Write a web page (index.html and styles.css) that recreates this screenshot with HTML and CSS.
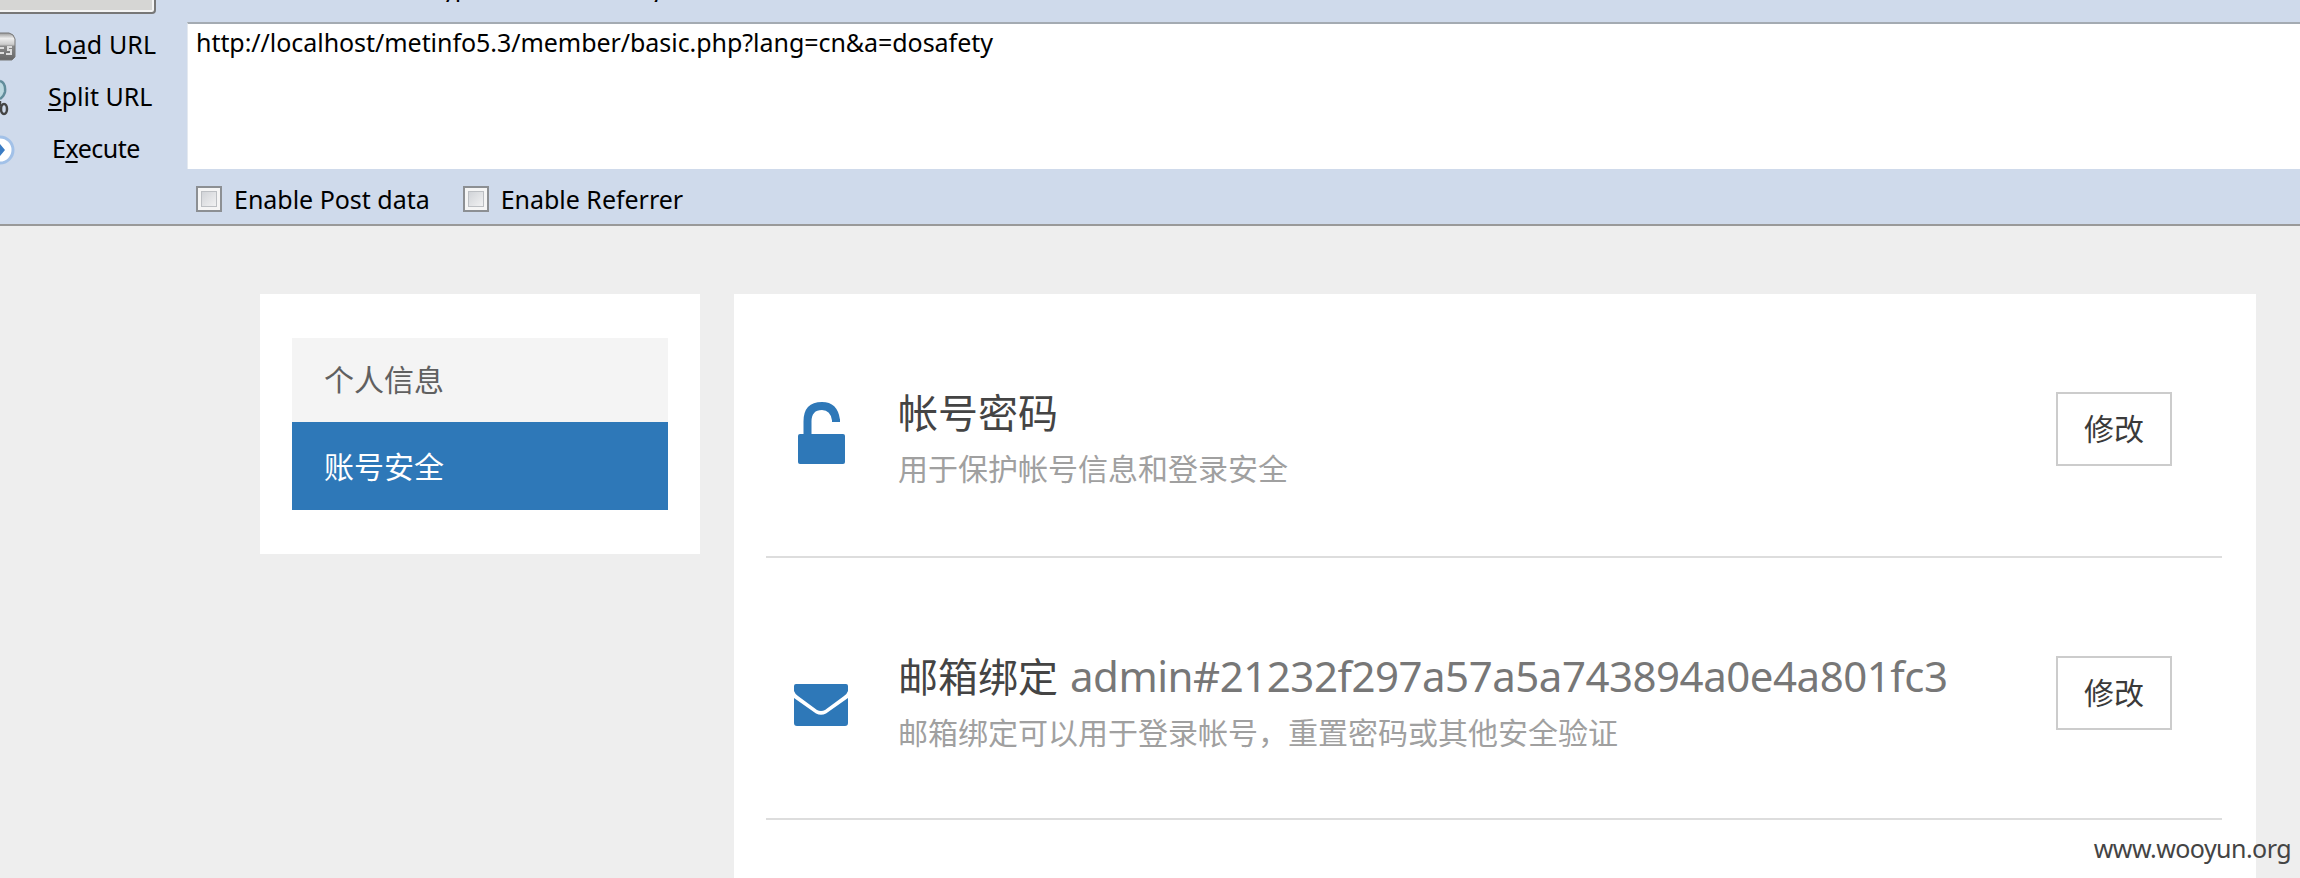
FILE: index.html
```html
<!DOCTYPE html>
<html lang="zh-CN">
<head>
<meta charset="utf-8">
<title>账号安全</title>
<link rel="stylesheet" href="styles.css">
</head>
<body>
<header class="hackbar">
  <div class="tool-select"></div>
  <div class="clipped-menu"><span class="yp">yp</span><span class="g">g</span></div>
  <nav class="actions">
    <div class="action"><svg class="action-icon" width="18" height="36" viewBox="0 0 18 36"><defs><linearGradient id="m" x1="0" y1="0" x2="0" y2="1"><stop offset="0" stop-color="#999"/><stop offset=".2" stop-color="#eee"/><stop offset=".42" stop-color="#ccc"/><stop offset=".5" stop-color="#888"/><stop offset="1" stop-color="#666"/></linearGradient></defs><path d="M-4 5H9Q14 6 15 11V29L12 32H-4Z" fill="url(#m)" stroke="#777"/><path d="M-2 20H4M0 25H4M12 19H8V22H11V26H6" stroke="#ddd" stroke-width="2" fill="none"/></svg><span class="action-label load">Lo<u>a</u>d URL</span></div>
    <div class="action"><svg class="action-icon" width="18" height="40" viewBox="0 0 18 40"><path d="M0 3Q6 5 5 14Q4 18 0 21" fill="#bcd8e0" stroke="#628d9b" stroke-width="2.500"/><path d="M0 23V28" stroke="#444" stroke-width="2.500"/><ellipse cx="4" cy="31" rx="3" ry="5" fill="none" stroke="#444" stroke-width="2.500"/></svg><span class="action-label split"><u>S</u>plit URL</span></div>
    <div class="action"><svg class="action-icon" width="18" height="36" viewBox="0 0 18 36"><circle cx="0" cy="18" r="13" fill="#fff" stroke="#a2c1e8" stroke-width="3"/><path d="M-4 15H0V12L5 18L0 24V21H-4Z" fill="#3b7cc4"/></svg><span class="action-label exec">E<u>x</u>ecute</span></div>
  </nav>
  <div class="request">
    <div class="url-field"><span class="url">http://localhost/metinfo5.3/member/basic.php?lang=cn&amp;a=dosafety</span></div>
    <div class="options">
      <label class="option"><i class="check"></i><span class="post">Enable Post data</span></label>
      <label class="option"><i class="check"></i><span class="referrer">Enable Referrer</span></label>
    </div>
  </div>
</header>
<main class="member">
  <aside class="sidebar">
    <a class="side-link">个人信息</a>
    <a class="side-link active">账号安全</a>
  </aside>
  <section class="panel">
    <article class="row">
      <div class="row-icon"><svg width="48" height="62" viewBox="0 0 48 62"><path d="M9.500 34V19.500Q9.500 4 24 4Q36 4 38 18" fill="none" stroke="#2e78b8" stroke-width="8"/><path d="M34 17H42V20H34Z" fill="#2e78b8"/><rect y="32" width="47" height="30" rx="2" fill="#2e78b8"/></svg></div>
      <div class="row-text"><h2>帐号密码</h2><p>用于保护帐号信息和登录安全</p></div>
      <button class="edit">修改</button>
    </article>
    <article class="row second">
      <div class="row-icon mail"><svg width="54" height="42" viewBox="0 0 54 42"><path d="M2 0H52Q54 0 54 2V7Q53 10 50 12L31 26Q27 28 23 26L4 12Q1 10 0 7V2Q0 0 2 0Z" fill="#2e78b8"/><path d="M0 14L22 29.500Q27 32 32 29.500L54 14V39Q54 42 51 42H3Q0 42 0 39Z" fill="#2e78b8"/></svg></div>
      <div class="row-text"><h2>邮箱绑定<span class="email">admin#21232f297a57a5a743894a0e4a801fc3</span></h2><p>邮箱绑定可以用于登录帐号，重置密码或其他安全验证</p></div>
      <button class="edit">修改</button>
    </article>
  </section>
</main>
<div class="watermark">www.wooyun.org</div>
</body>
</html>
```
FILE: styles.css
```css
* { box-sizing: border-box; }
body { margin: 0; width: 2300px; height: 878px; overflow: hidden; position: relative; background: #eee; font-family: "Noto Sans", "Noto Sans CJK SC", sans-serif; }
.hackbar { position: relative; display: flex; height: 226px; padding-top: 22px; background: #cfdaeb; border-bottom: 2px solid #999; color: #000; font-size: 25px; white-space: nowrap; }
.tool-select { position: absolute; left: -8px; top: -20px; width: 164px; height: 34px; background: #d6d6d4; border: 2px solid #777; border-radius: 4px; box-shadow: inset 0 0 0 2px #f4f4f4; }
.clipped-menu { position: absolute; left: 442px; top: -24px; height: 26px; line-height: 26px; overflow: hidden; }
.clipped-menu .g { margin-left: 174px; }
.actions { width: 187px; }
.action { display: flex; align-items: center; height: 52px; }
.action-icon { flex: none; width: 18px; margin-bottom: 4px; }
.action-label { line-height: 34px; padding-bottom: 8px; }
.action-label u { text-decoration-thickness: 2px; text-underline-offset: 3px; }
.load { margin-left: 26px; letter-spacing: 0.15px; }
.split { margin-left: 30px; }
.exec { margin-left: 34px; letter-spacing: -0.5px; }
.request { flex: 1; }
.url-field { height: 147px; padding: 1px 0 0 8px; background: #fff; border-top: 2px solid #a4abb2; border-left: 1px solid #e4e9f0; line-height: 34px; letter-spacing: -0.05px; }
.options { display: flex; gap: 33px; height: 55px; padding: 5px 0 0 9px; }
.option { display: flex; align-items: center; gap: 12px; letter-spacing: -0.02px; }
.option span { padding-bottom: 1px; }
.check { width: 26px; height: 26px; border: 2px solid #8c8f93; background: linear-gradient(135deg, #c8cbd0, #fafafa); box-shadow: inset 0 0 0 3px #f5f5f5, inset 0 0 0 4px #bcbfc3; }
.member { display: flex; align-items: flex-start; gap: 34px; padding: 68px 44px 0 260px; }
.sidebar { width: 440px; height: 260px; padding: 44px 32px; background: #fff; }
.side-link { display: block; height: 84px; padding-left: 32px; background: #f4f4f4; color: #606060; font-size: 30px; line-height: 84px; }
.side-link.active { height: 88px; line-height: 89px; background: #2e78b8; color: #fff; }
.panel { width: 1522px; height: 584px; padding: 0 34px 0 32px; background: #fff; }
.row { display: flex; align-items: flex-start; height: 264px; border-bottom: 2px solid #ddd; }
.row.second { height: 262px; }
.row-icon { width: 132px; height: 170px; padding: 108px 0 0 32px; }
.row-icon.mail { padding: 126px 0 0 28px; }
.row-text { flex: 1; padding-top: 91px; white-space: nowrap; }
h2 { margin: 0; color: #444; font-size: 40px; font-weight: 400; line-height: 56px; height: 56px; }
.second h2 { line-height: 54px; }
.email { margin-left: 12px; color: #777; font-size: 42px; letter-spacing: -0.48px; }
p { margin: 7px 0 0; color: #a0a0a0; font-size: 30px; line-height: 42px; }
.edit { width: 116px; height: 74px; margin: 98px 50px 0 0; padding: 0 0 4px; border: 2px solid #ccc; background: #fff; color: #3a3a3a; font: 30px "Noto Sans CJK SC", sans-serif; }
.watermark { position: absolute; right: 9px; bottom: 13px; color: #444; font-size: 25px; line-height: 34px; letter-spacing: -0.55px; }
```
